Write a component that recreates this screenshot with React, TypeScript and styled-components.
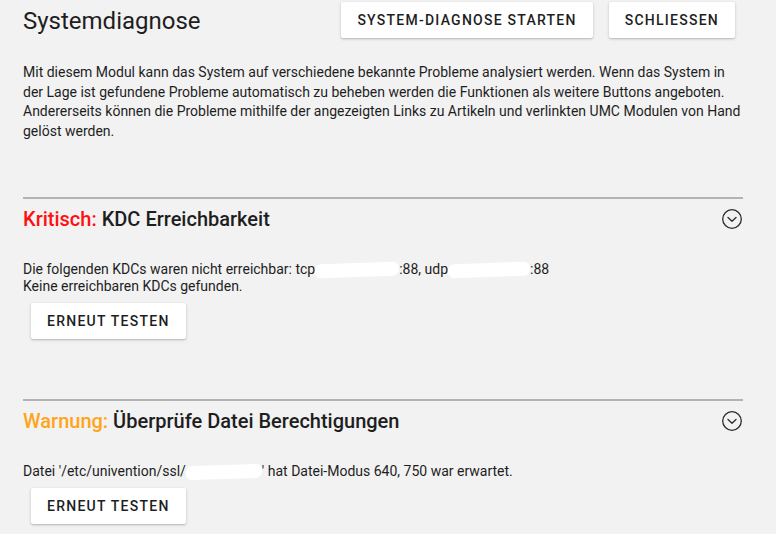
import styled, { createGlobalStyle } from 'styled-components';

const GlobalStyle = createGlobalStyle`
    html, body {
        margin: 0;
        padding: 0;
        background: #f2f2f2;
    }

    body {
        font-family: Roboto, "Liberation Sans", sans-serif;
        color: #1e1e1e;
    }
`;

const Page = styled.div`
    width: 776px;
    height: 534px;
    overflow: hidden;
    padding: 2px 33px 0 23px;
    box-sizing: border-box;
`;

const Header = styled.div`
    display: flex;
    align-items: flex-start;
    justify-content: space-between;
    padding-right: 8px;
`;

const Title = styled.h1`
    margin: 4px 0 0;
    font-size: 24px;
    font-weight: 400;
    line-height: 30px;
    color: #1e1e1e;
`;

const Actions = styled.div`
    display: flex;
    gap: 16px;
`;

const Button = styled.button<{ $indent?: boolean }>`
    height: 36px;
    padding: 0 16px;
    margin-left: ${(p) => (p.$indent ? '8px' : '0')};
    border: none;
    border-radius: 2px;
    background: #fff;
    box-shadow: 0 1px 3px rgba(0, 0, 0, 0.22), 0 1px 1px rgba(0, 0, 0, 0.06);
    font-family: Roboto, "Liberation Sans", sans-serif;
    font-size: 14px;
    font-weight: 500;
    letter-spacing: 1.25px;
    text-transform: uppercase;
    color: #1e1e1e;
    cursor: pointer;
`;

const Intro = styled.p`
    margin: 25px 0 0;
    width: 720px;
    font-size: 14px;
    line-height: 19.7px;
`;

const Section = styled.section<{ $first?: boolean }>`
    margin-top: ${(p) => (p.$first ? '55px' : '60px')};
    border-top: 2px solid #b3b3b3;
`;

const SectionHead = styled.div`
    height: 40px;
    display: flex;
    align-items: center;
    justify-content: space-between;
`;

const SectionTitle = styled.h2`
    margin: 0;
    font-size: 20px;
    font-weight: 500;
    line-height: 24px;
`;

const Level = styled.span<{ $color: string }>`
    color: ${(p) => p.$color};
`;

const Body = styled.div`
    margin: 22px 0 8px;
    font-size: 14px;
    line-height: 17px;
`;

const Redacted = styled.span<{ $w: number }>`
    display: inline-block;
    width: ${(p) => p.$w}px;
    height: 14px;
    background: #fff;
    border-radius: 6px;
    vertical-align: -3px;
    transform: skewY(-2deg);
`;

const Toggle = () => (
    <svg width="22" height="22" viewBox="0 0 22 22" fill="none" stroke="#2b2b2b" strokeWidth="1.3">
        <circle cx="11" cy="11" r="9.3" />
        <path d="M7 9.5 L11 13.3 L15 9.5" strokeLinecap="round" strokeLinejoin="round" />
    </svg>
);

const App = () => (
    <Page>
        <GlobalStyle />
        <Header>
            <Title>Systemdiagnose</Title>
            <Actions>
                <Button type="button">System-Diagnose starten</Button>
                <Button type="button">Schliessen</Button>
            </Actions>
        </Header>
        <Intro>
            Mit diesem Modul kann das System auf verschiedene bekannte Probleme analysiert werden. Wenn das System in
            der Lage ist gefundene Probleme automatisch zu beheben werden die Funktionen als weitere Buttons angeboten.
            Andererseits können die Probleme mithilfe der angezeigten Links zu Artikeln und verlinkten UMC Modulen von Hand
            gelöst werden.
        </Intro>

        <Section $first>
            <SectionHead>
                <SectionTitle>
                    <Level $color="#ff1010">Kritisch:</Level> KDC Erreichbarkeit
                </SectionTitle>
                <Toggle />
            </SectionHead>
            <Body>
                Die folgenden KDCs waren nicht erreichbar: tcp<Redacted $w={84} />:88, udp<Redacted $w={82} />:88
                <br />
                Keine erreichbaren KDCs gefunden.
            </Body>
            <Button type="button" $indent>Erneut testen</Button>
        </Section>

        <Section>
            <SectionHead>
                <SectionTitle>
                    <Level $color="#ffa41b">Warnung:</Level> Überprüfe Datei Berechtigungen
                </SectionTitle>
                <Toggle />
            </SectionHead>
            <Body>
                Datei '/etc/univention/ssl/<Redacted $w={76} />' hat Datei-Modus 640, 750 war erwartet.
            </Body>
            <Button type="button" $indent>Erneut testen</Button>
        </Section>
    </Page>
);

export default App;
